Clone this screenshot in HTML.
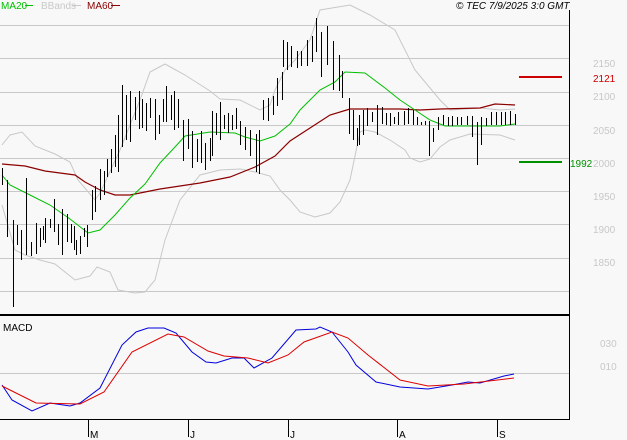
<!DOCTYPE html>
<html><head><meta charset="utf-8"><style>
html,body{margin:0;padding:0;background:#f8f8f8;width:627px;height:440px;overflow:hidden}
svg{display:block}
text{font-family:"Liberation Sans",sans-serif;font-size:10px}
</style></head><body>
<svg width="627" height="440" viewBox="0 0 627 440" xmlns="http://www.w3.org/2000/svg">
<rect width="627" height="440" fill="#f8f8f8"/>
<g stroke="#c8c8c8" stroke-width="1">
<line x1="0" y1="25.5" x2="569" y2="25.5"/><line x1="0" y1="58.5" x2="569" y2="58.5"/><line x1="0" y1="92.5" x2="569" y2="92.5"/><line x1="0" y1="125.5" x2="569" y2="125.5"/><line x1="0" y1="158.5" x2="569" y2="158.5"/><line x1="0" y1="191.5" x2="569" y2="191.5"/><line x1="0" y1="224.5" x2="569" y2="224.5"/><line x1="0" y1="258.5" x2="569" y2="258.5"/><line x1="0" y1="291.5" x2="569" y2="291.5"/>
<line x1="0" y1="373.5" x2="569" y2="373.5"/>
</g>
<g fill="none" stroke="#c8c8c8" stroke-width="1">
<polyline points="2,145 10,135 22,132 35,146 55,154 70,162 78,180 95,200 100,193 120,150 140,100 150,72 165,64 185,75 210,91 220,99 240,100 260,110 270,105 275,90 285,70 295,60 310,40 320,10 350,5 370,15 395,30 415,70 440,100 450,110 480,108 500,110 515,109"/>
<polyline points="2,205 15,250 25,255 40,260 55,264 65,272 75,280 90,276 97,267 110,272 118,290 135,293 145,292 155,280 165,240 180,200 200,175 220,170 240,169 255,172 270,176 280,190 290,200 300,212 315,217 330,213 340,202 350,180 360,132 365,130 375,132 390,140 405,150 410,158 420,162 430,159 440,147 450,140 470,134 500,135 515,140"/>
</g>
<polyline fill="none" stroke="#8b0000" stroke-width="1.2" points="2,164 25,166 45,171 75,175 85,182 100,190 115,195 130,195 140,193 160,189 200,183 230,177 255,167 275,156 290,141 310,128 330,115 350,109 360,109 400,109 420,110 440,109 480,108 495,104 515,105"/>
<polyline fill="none" stroke="#00c000" stroke-width="1" points="2,175 10,185 30,195 50,205 70,219 88,233 100,230 115,215 130,198 145,184 160,163 175,147 185,136 210,132 235,133 245,137 260,141 275,136 290,124 300,110 320,90 335,82 345,72 365,73 385,88 400,100 415,110 430,120 445,126 465,126 500,126 515,124"/>
<path stroke="#000" stroke-width="1" fill="none" d="M2.5 168V185M7.5 180V237M13.5 220V307M17.5 225V245M21.5 230V260M26.5 178V255M31.5 242V256M36.5 223V254M40.5 228V247M43.5 226V240M45.5 218V243M50.5 219V228M54.5 199V232M58.5 224V245M62.5 209V255M67.5 214V242M71.5 224V243M74.5 226V250M76.5 240V255M80.5 236V254M84.5 228V237M87.5 225V247M92.5 190V220M95.5 186V212M100.5 169V200M104.5 171V195M107.5 159V177M111.5 149V173M115.5 135V167M118.5 115V172M122.5 85V147M126.5 95V140M130.5 91V142M135.5 97V120M139.5 91V129M142.5 99V128M146.5 103V131M150.5 98V118M155.5 99V140M159.5 115V134M163.5 99V122M166.5 86V122M171.5 95V120M174.5 91V130M178.5 99V128M183.5 120V161M188.5 119V149M192.5 131V168M197.5 139V162M201.5 131V163M205.5 143V170M210.5 138V161M212.5 111V156M216.5 113V135M220.5 102V140M224.5 115V129M228.5 113V133M232.5 115V130M236.5 108V129M240.5 121V145M245.5 127V150M250.5 130V156M256.5 134V172M259.5 130V174M263.5 100V120M268.5 98V121M273.5 96V115M277.5 78V106M282.5 72V100M283.5 40V67M287.5 42V70M291.5 46V67M297.5 51V68M301.5 51V66M307.5 40V66M312.5 36V62M316.5 18V52M321.5 32V77M327.5 26V65M333.5 41V90M339.5 55V91M342.5 71V98M349.5 98V134M353.5 110V140M357.5 128V146M359.5 115V145M363.5 110V135M367.5 108V126M372.5 112V122M377.5 105V135M382.5 107V124M386.5 113V125M390.5 113V126M394.5 117V124M398.5 112V125M404.5 111V125M408.5 108V124M413.5 110V125M417.5 117V125M421.5 122V125M425.5 121V125M429.5 121V156M433.5 128V142M438.5 117V130M443.5 115V125M448.5 117V126M452.5 116V126M457.5 117V125M461.5 117V125M467.5 116V125M472.5 116V137M477.5 122V165M481.5 117V145M486.5 118V126M491.5 112V125M496.5 112V125M501.5 112V125M505.5 112V125M510.5 111V125M515.5 114V125"/>
<line x1="519" y1="77" x2="562" y2="77" stroke="#cc0000" stroke-width="2"/>
<line x1="519" y1="162" x2="562" y2="162" stroke="#009000" stroke-width="2"/>
<line x1="569.5" y1="10" x2="569.5" y2="420" stroke="#000" stroke-width="1"/>
<line x1="0" y1="315" x2="569" y2="315" stroke="#000" stroke-width="2"/>
<line x1="0" y1="419.5" x2="570" y2="419.5" stroke="#000" stroke-width="1"/>
<g fill="#c8c8c8">
<text x="593" y="67">2150</text><text x="593" y="100">2100</text><text x="593" y="134">2050</text><text x="593" y="167">2000</text><text x="593" y="200">1950</text><text x="593" y="233">1900</text><text x="593" y="266">1850</text>
<text x="600" y="347">030</text><text x="600" y="370">010</text>
</g>
<text x="593" y="82" fill="#cc0000">2121</text>
<text x="570" y="167" fill="#009000">1992</text>
<polyline fill="none" stroke="#0000dd" stroke-width="1" points="2,385 12,400 32,411 50,403 70,406 80,403 100,388 122,345 136,332 148,328 164,328 176,333 192,352 206,362 216,363 232,358 244,358 254,368 272,358 296,330 316,329 320,327 332,332 348,352 356,365 376,382 400,387 428,389 452,385 468,382 480,383 504,376 514,374"/>
<polyline fill="none" stroke="#dd0000" stroke-width="1" points="2,386 16,393 36,403 80,404 104,392 132,352 168,334 184,337 208,351 224,356 248,358 268,363 288,355 304,342 332,332 348,338 368,355 400,380 428,386 464,384 514,378"/>
<text x="3" y="331" fill="#000" font-size="9">MACD</text>
<g stroke="#000"><line x1="88.5" y1="420" x2="88.5" y2="437"/><line x1="188.5" y1="420" x2="188.5" y2="437"/><line x1="288.5" y1="420" x2="288.5" y2="437"/><line x1="397.5" y1="420" x2="397.5" y2="437"/><line x1="497.5" y1="420" x2="497.5" y2="437"/></g>
<g fill="#000"><text x="90" y="438">M</text><text x="190" y="438">J</text><text x="290" y="438">J</text><text x="399" y="438">A</text><text x="499" y="438">S</text></g>
<text x="1" y="9" fill="#00c000">MA20</text><line x1="25" y1="5.5" x2="33" y2="5.5" stroke="#00c000"/>
<text x="41" y="9" fill="#c8c8c8">BBands</text><line x1="72" y1="5.5" x2="81" y2="5.5" stroke="#c8c8c8"/>
<text x="87" y="9" fill="#8b0000">MA60</text><line x1="111" y1="5.5" x2="120" y2="5.5" stroke="#8b0000"/>
<text x="456" y="9" fill="#000" font-style="italic">© TEC 7/9/2025 3:0 GMT</text>
</svg>
</body></html>
